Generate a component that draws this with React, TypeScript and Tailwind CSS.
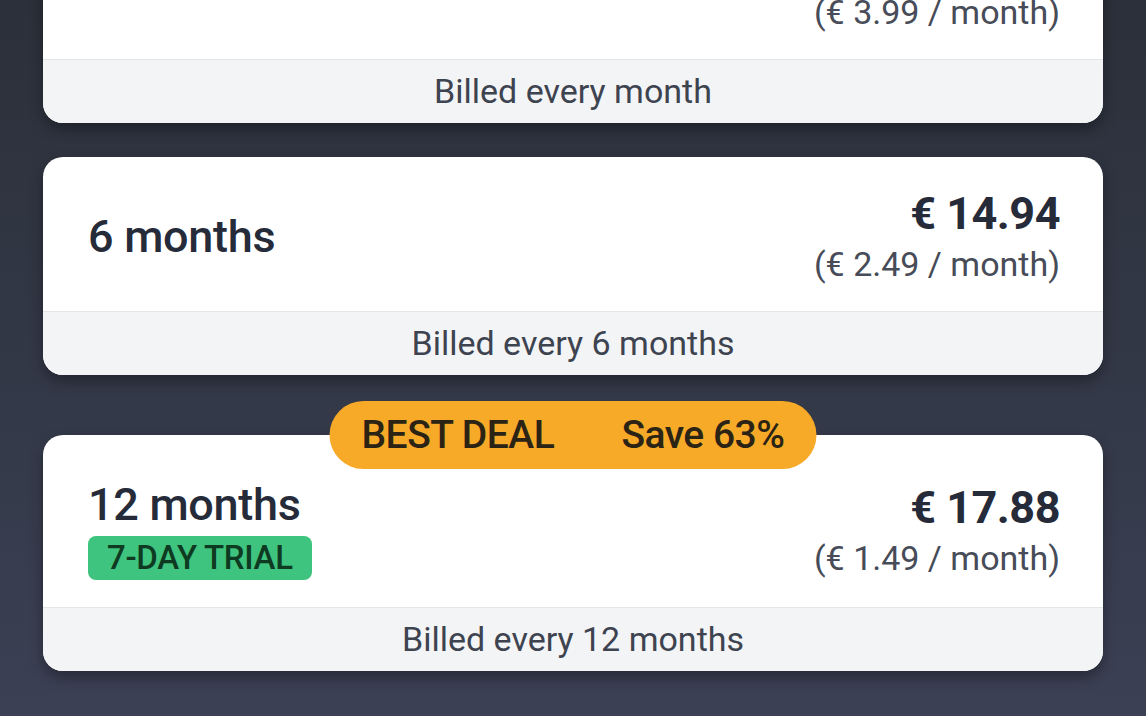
import React from 'react';

interface Plan {
    label: string;
    price: string;
    perMonth: string;
    billed: string;
    trial?: boolean;
    deal?: { title: string; save: string };
}

const PLANS: Plan[] = [
    { label: '1 month', price: '€ 3.99', perMonth: '(€ 3.99 / month)', billed: 'Billed every month' },
    { label: '6 months', price: '€ 14.94', perMonth: '(€ 2.49 / month)', billed: 'Billed every 6 months' },
    {
        label: '12 months',
        price: '€ 17.88',
        perMonth: '(€ 1.49 / month)',
        billed: 'Billed every 12 months',
        trial: true,
        deal: { title: 'BEST DEAL', save: 'Save 63%' },
    },
];

const PlanCard: React.FC<{ plan: Plan }> = ({ plan }) => {
    return (
        <div className="relative">
            {plan.deal && (
                <div className="absolute left-1/2 top-0 z-10 flex h-[68px] w-[487px] -translate-x-1/2 -translate-y-1/2 items-center justify-between rounded-full bg-[#f7a928] px-[32px] text-[39px] font-medium leading-none tracking-[-0.5px] text-[#2b2415]">
                    <span>{plan.deal.title}</span>
                    <span>{plan.deal.save}</span>
                </div>
            )}
            <div className="overflow-hidden rounded-[20px] bg-white shadow-[0_6px_14px_rgba(0,0,0,0.35)]">
                <div
                    className={
                        plan.trial
                            ? 'flex items-center justify-between pl-[45px] pr-[43px] pt-[46px] pb-[27px]'
                            : 'flex h-[154px] items-center justify-between pl-[45px] pr-[43px] pt-[6px]'
                    }
                >
                    <div className="flex flex-col items-start">
                        <span className="text-[45px] font-medium leading-[48px] tracking-[-0.3px] text-[#262b3a]">{plan.label}</span>
                        {plan.trial && (
                            <span className="mt-[7px] flex h-[44px] items-center rounded-[8px] bg-[#3ec47e] px-[19px] text-[33px] font-medium tracking-[-0.3px] text-[#0f3a22]">
                                7-DAY TRIAL
                            </span>
                        )}
                    </div>
                    <div className="flex flex-col items-end">
                        <span className="text-[45px] font-bold leading-[48px] tracking-[-0.5px] text-[#262b3a]">{plan.price}</span>
                        <span className="mt-[6px] text-[34px] leading-[40px] text-[#474c58]">{plan.perMonth}</span>
                    </div>
                </div>
                <div className="flex h-[64px] items-center justify-center border-t border-[#e3e5e9] bg-[#f3f4f6] text-[34px] text-[#3e4350]">
                    {plan.billed}
                </div>
            </div>
        </div>
    );
};

export default function App() {
    return (
        <div
            className="h-[716px] w-full overflow-hidden bg-gradient-to-b from-[#2b303a] to-[#3b4054]"
            style={{ fontFamily: 'Roboto, "Noto Sans", sans-serif' }}
        >
            <div className="-mt-[95px] flex flex-col px-[43px]">
                <PlanCard plan={PLANS[0]} />
                <div className="h-[34px]" />
                <PlanCard plan={PLANS[1]} />
                <div className="h-[60px]" />
                <PlanCard plan={PLANS[2]} />
            </div>
        </div>
    );
}
